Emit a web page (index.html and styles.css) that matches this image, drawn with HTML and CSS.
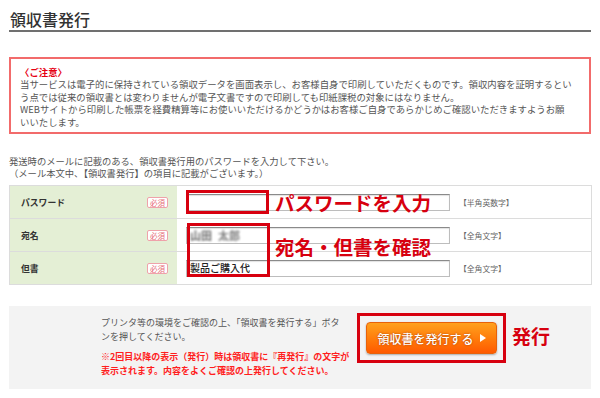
FILE: index.html
```html
<!DOCTYPE html>
<html lang="ja">
<head>
    <meta charset="UTF-8">
    <meta name="viewport" content="width=device-width, initial-scale=1.0">
    <title>領収書発行</title>
    <link rel="stylesheet" href="styles.css">
</head>
<body>
<div class="wrap">
    <h1 class="page-title">領収書発行</h1>

    <div class="notice">
        <p class="notice-head">〈ご注意〉</p>
        <p>当サービスは電子的に保持されている領収データを画面表示し、お客様自身で印刷していただくものです。領収内容を証明するとい<br>う点では従来の領収書とは変わりませんが電子文書ですので印刷しても印紙課税の対象にはなりません。<br>WEBサイトから印刷した帳票を経費精算等にお使いいただけるかどうかはお客様ご自身であらかじめご確認いただきますようお願<br>いいたします。</p>
    </div>

    <p class="lead">発送時のメールに記載のある、領収書発行用のパスワードを入力して下さい。<br>（メール本文中、【領収書発行】の項目に記載がございます。）</p>

    <div class="form-area">
        <div class="form-table">
            <div class="form-row">
                <div class="form-label"><span>パスワード</span><span class="req">必須</span></div>
                <div class="form-input"><span class="field"></span><span class="hint">【半角英数字】</span></div>
            </div>
            <div class="form-row">
                <div class="form-label"><span>宛名</span><span class="req">必須</span></div>
                <div class="form-input"><span class="field"><span class="blur">山田</span><span class="blur blur-light">太郎</span></span><span class="hint">【全角文字】</span></div>
            </div>
            <div class="form-row">
                <div class="form-label"><span>但書</span><span class="req">必須</span></div>
                <div class="form-input"><span class="field field-filled">製品ご購入代</span><span class="hint">【全角文字】</span></div>
            </div>
        </div>
        <!-- annotation overlays -->
        <div class="mark mark-pass"></div>
        <div class="mark mark-name"></div>
        <p class="callout callout-pass">パスワードを入力</p>
        <p class="callout callout-name">宛名・但書を確認</p>
    </div>

    <div class="issue">
        <div class="issue-text">
            <p>プリンタ等の環境をご確認の上、「領収書を発行する」ボタ<br>ンを押してください。</p>
            <p class="issue-warn">※2回目以降の表示（発行）時は領収書に『再発行』の文字が<br>表示されます。内容をよくご確認の上発行してください。</p>
        </div>
        <div class="issue-mark">
            <button class="issue-btn">領収書を発行する<span class="arrow"></span></button>
        </div>
        <span class="callout-issue">発行</span>
    </div>
</div>
</body>
</html>
```

FILE: styles.css
```css
body {
    margin: 0;
    background: #fff;
    color: #444;
    font-family: "Noto Sans CJK JP", "Noto Sans", sans-serif;
}

p {
    margin: 0;
}

.wrap {
    padding: 0 9px;
}

.page-title {
    margin: 0;
    padding: 9px 0 1px 1px;
    font-size: 16px;
    line-height: 20px;
    font-weight: 500;
    color: #333;
    border-bottom: 2px solid #707070;
}

/* notice box */
.notice {
    margin-top: 25px;
    border: 2px solid #f26b6b;
    padding: 7px 8px 4px 9px;
    font-size: 9.4px;
    line-height: 12.4px;
    white-space: nowrap;
    color: #555;
}

.notice-head {
    color: #e60012;
    font-weight: bold;
}

.lead {
    margin-top: 21px;
    font-size: 9.3px;
    line-height: 12px;
    white-space: nowrap;
    color: #555;
}

/* form */
.form-area {
    position: relative;
    margin-top: 6px;
}

.form-table {
    width: 583px;
    box-sizing: border-box;
    border: 1px solid #dcdcdc;
}

.form-row {
    display: flex;
    height: 32px;
}

.form-row + .form-row {
    height: 33px;
    border-top: 1px solid #dcdcdc;
    box-sizing: border-box;
}

.form-label {
    display: flex;
    justify-content: space-between;
    align-items: center;
    width: 167px;
    box-sizing: border-box;
    padding: 0 9px 0 11px;
    background: #e4efd5;
    font-size: 8.8px;
    font-weight: bold;
    color: #333;
}

.form-input {
    display: flex;
    align-items: center;
    padding-left: 9px;
    white-space: nowrap;
}

.req {
    font-size: 7.5px;
    line-height: 9px;
    font-weight: normal;
    color: #e66a75;
    background: #fff;
    border: 1px solid #efa2aa;
    border-radius: 2px;
    padding: 0 2px;
}

.field {
    display: inline-block;
    box-sizing: border-box;
    width: 264px;
    height: 17px;
    border: 1px solid #bdbdbd;
    border-top-color: #8a8a8a;
    box-shadow: inset 0 1px 1px rgba(0, 0, 0, 0.12);
    background: #fff;
    padding-left: 3px;
    font-size: 10px;
    line-height: 14px;
}

.field-filled {
    color: #222;
    font-weight: 500;
}

.blur {
    display: inline-block;
    font-size: 11px;
    font-weight: bold;
    color: #666;
    filter: blur(0.9px);
    margin-right: 6px;
}

.blur-light {
    color: #808080;
}

.hint {
    margin-left: 9px;
    font-size: 7.8px;
    color: #666;
}

.mark {
    position: absolute;
    box-sizing: border-box;
    border: 3px solid #d7000f;
}

.mark-pass {
    left: 177px;
    top: 5px;
    width: 83px;
    height: 24px;
}

.mark-name {
    left: 178px;
    top: 38px;
    width: 83px;
    height: 54px;
}

.callout {
    position: absolute;
    left: 266px;
    font-size: 19.5px;
    line-height: 22px;
    font-weight: bold;
    color: #d7000f;
    white-space: nowrap;
}

.callout-pass {
    top: 7px;
}

.callout-name {
    top: 51px;
}

/* issue box */
.issue {
    display: flex;
    align-items: flex-start;
    box-sizing: border-box;
    height: 83px;
    margin-top: 21px;
    padding: 7px 0 0 92px;
    background: #f3f3f3;
}

.issue-text {
    width: 256px;
    margin-top: 3px;
    font-size: 9px;
    line-height: 13.5px;
    white-space: nowrap;
    color: #555;
}

.issue-warn {
    margin-top: 7px;
    color: #ff1e1e;
    font-weight: bold;
}

.issue-mark {
    border: 3px solid #d7000f;
    padding: 6px;
}

.issue-btn {
    display: flex;
    align-items: center;
    justify-content: center;
    box-sizing: border-box;
    width: 131px;
    height: 32px;
    padding: 0;
    border: 1px solid #e8620a;
    border-radius: 4px;
    background: linear-gradient(#ffa11e, #ff7a0a 55%, #ff5a00);
    box-shadow: 0 1px 2px rgba(0, 0, 0, 0.3);
    color: #fff;
    font-family: "Noto Sans CJK JP", sans-serif;
    font-size: 12px;
    font-weight: 500;
    text-shadow: 0 0 2px rgba(150, 50, 0, 0.9);
    cursor: pointer;
}

.arrow {
    width: 0;
    height: 0;
    margin-left: 6px;
    border-top: 4px solid transparent;
    border-bottom: 4px solid transparent;
    border-left: 6px solid #fff;
}

.callout-issue {
    margin: 12px 0 0 6px;
    font-size: 19px;
    line-height: 22px;
    font-weight: bold;
    color: #d7000f;
}
```
